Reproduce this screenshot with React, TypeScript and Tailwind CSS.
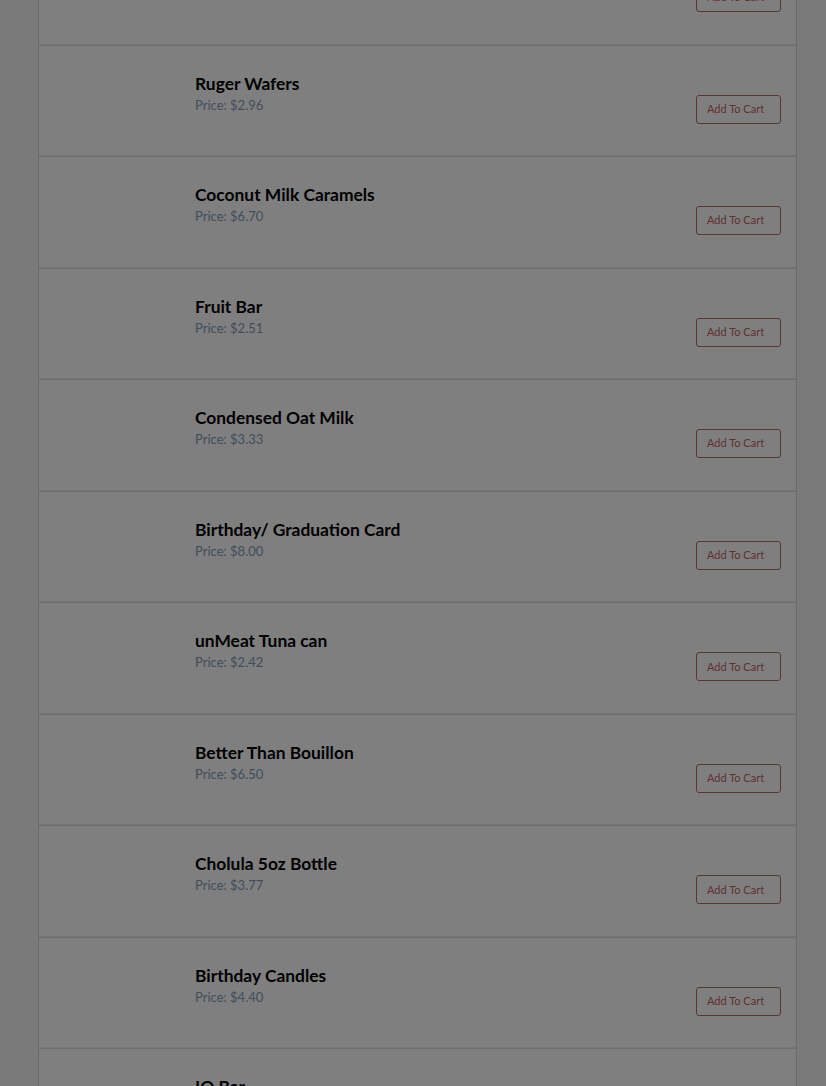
import React from 'react';

type Product = { name: string; price: string };

const products: Product[] = [
    { name: 'Vegan Marshmallows', price: '$5.25' },
    { name: 'Ruger Wafers', price: '$2.96' },
    { name: 'Coconut Milk Caramels', price: '$6.70' },
    { name: 'Fruit Bar', price: '$2.51' },
    { name: 'Condensed Oat Milk', price: '$3.33' },
    { name: 'Birthday/ Graduation Card', price: '$8.00' },
    { name: 'unMeat Tuna can', price: '$2.42' },
    { name: 'Better Than Bouillon', price: '$6.50' },
    { name: 'Cholula 5oz Bottle', price: '$3.77' },
    { name: 'Birthday Candles', price: '$4.40' },
    { name: 'IQ Bar', price: '$3.25' },
];

function ProductRow({ product }: { product: Product }) {
    return (
        <div className="flex h-[111.56px] border-b border-[#dcdcdc] shadow-[inset_0_-4px_0_-3px_#ececec]">
            <div className="w-[156px] shrink-0" />
            <div className="flex-1 pt-[27px]">
                <h3 className="text-[17.4px] leading-[21px] font-bold text-black">{product.name}</h3>
                <p className="text-[13px] leading-[22px] text-[#829cb8]">Price: {product.price}</p>
            </div>
            <div className="pr-[15px] pt-[49px]">
                <button className="h-[29px] w-[85px] rounded-[3px] border border-[#b86a6a] pl-[10px] text-left text-[11px] text-[#c4605d]">
                    Add To Cart
                </button>
            </div>
        </div>
    );
}

export default function App() {
    return (
        <div className="relative h-[1086px] overflow-hidden bg-[#f4f4f4]" style={{ fontFamily: 'Lato, "Open Sans", sans-serif' }}>
            <div className="ml-[38px] mt-[-66px] w-[759px] border-x border-[#d8d8d8] bg-white">
                {products.map((p) => (
                    <ProductRow key={p.name} product={p} />
                ))}
            </div>
            <div className="fixed inset-0 bg-black/50" />
        </div>
    );
}
